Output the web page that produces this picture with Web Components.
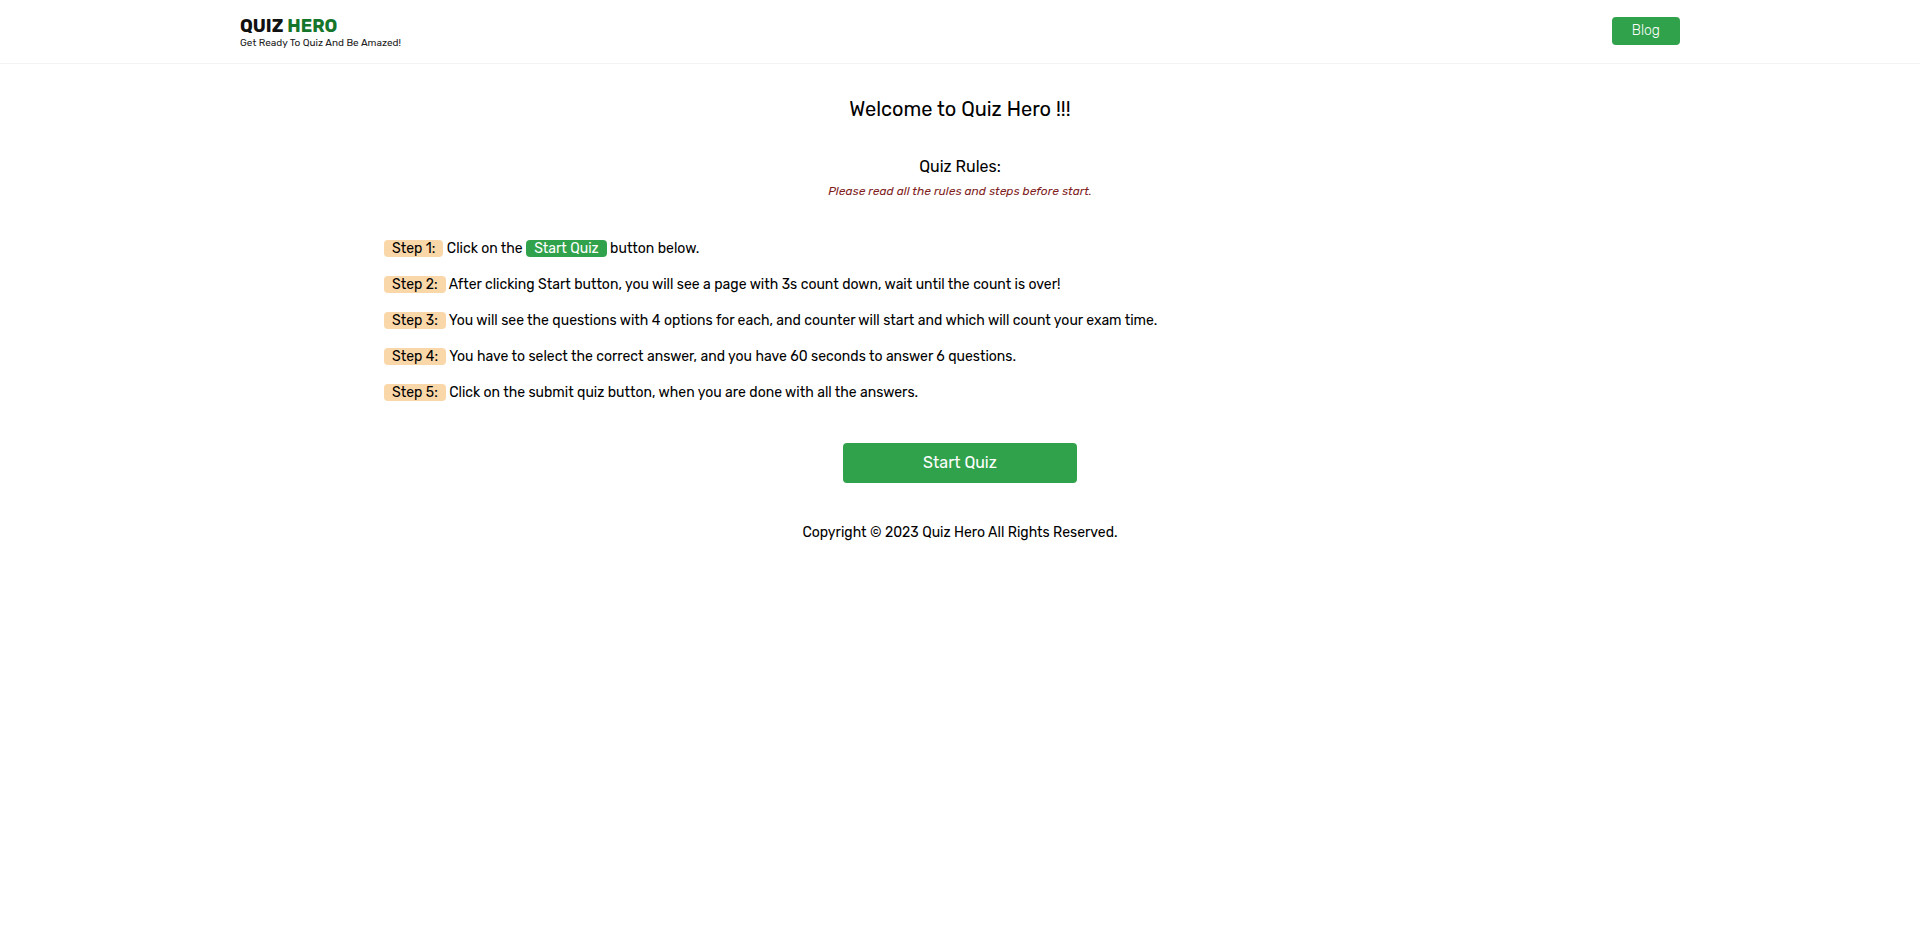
<!DOCTYPE html>
<html lang="en">
<head>
<meta charset="utf-8">
<meta name="viewport" content="width=device-width, initial-scale=1">
<title>Quiz Hero</title>
<style>
  body {
    margin: 0;
    background: #fff;
    color: #000;
    font-family: Rubik, "Open Sans", "Noto Sans", sans-serif;
    font-size: 14px;
    line-height: 20px;
    --green: #31a24c;
    --tag: #fad7a9;
  }
</style>
</head>
<body>
<quiz-app></quiz-app>

<template id="header-tpl">
  <style>
    :host { display: block; border-bottom: 1px solid #f3f4f6; }
    header {
      display: flex; align-items: center; justify-content: space-between;
      width: 75%; margin: 0 auto; padding: 14px 0 15px;
    }
    h1 { margin: 0; font-size: 18px; line-height: 24px; font-weight: 700; color: #111; }
    h1 span { color: #15762b; }
    p { margin: 0; font-size: 10px; line-height: 10px; color: #222; }
  </style>
  <header>
    <div>
      <h1>QUIZ <span>HERO</span></h1>
      <p>Get Ready To Quiz And Be Amazed!</p>
    </div>
    <nav><slot></slot></nav>
  </header>
</template>

<template id="link-tpl">
  <style>
    :host { display: block; }
    a {
      display: block; padding: 4px 20px; border-radius: 4px; font-weight: 300;
      background: var(--green); color: #fff; text-decoration: none;
    }
  </style>
  <a href="#blog"><slot></slot></a>
</template>

<template id="step-tpl">
  <style>
    :host { display: block; }
    .tag {
      display: inline-block; padding: 0 8px; border-radius: 4px;
      line-height: 17px; background: var(--tag);
    }
  </style>
  <span class="tag">Step <span id="n"></span>:</span> <slot></slot>
</template>

<template id="badge-tpl">
  <style>
    :host {
      display: inline-block; padding: 0 8px; border-radius: 4px;
      line-height: 17px; background: var(--green); color: #fff;
    }
  </style>
  <slot></slot>
</template>

<template id="start-tpl">
  <style>
    :host { display: block; }
    button {
      display: block; width: 100%; padding: 8px; border: 0; border-radius: 4px;
      background: var(--green); color: #fff; font: inherit;
      font-size: 16px; line-height: 24px; cursor: pointer;
    }
  </style>
  <button type="button"><slot></slot></button>
</template>

<template id="app-tpl">
  <style>
    :host { display: block; }
    main { width: 60%; margin: 0 auto; padding-top: 31px; }
    h2, h3, p { margin: 0; font-weight: 400; text-align: center; }
    h2 { font-size: 20px; line-height: 28px; }
    h3 { margin-top: 32px; font-size: 16px; line-height: 24px; }
    .note { margin-top: 2px; font-size: 12px; font-style: italic; color: #7f1d1d; }
    .steps { display: grid; gap: 16px; margin: 38px 0 40px; }
    quiz-start { width: 234px; margin: 0 auto; }
    footer { padding: 40px 0; text-align: center; }
  </style>
  <quiz-header><quiz-link>Blog</quiz-link></quiz-header>
  <main>
    <h2>Welcome to Quiz Hero !!!</h2>
    <h3>Quiz Rules:</h3>
    <p class="note">Please read all the rules and steps before start.</p>
    <div class="steps" role="list">
      <quiz-step role="listitem" number="1">Click on the <quiz-badge>Start Quiz</quiz-badge> button below.</quiz-step>
      <quiz-step role="listitem" number="2">After clicking Start button, you will see a page with 3s count down, wait until the count is over!</quiz-step>
      <quiz-step role="listitem" number="3">You will see the questions with 4 options for each, and counter will start and which will count your exam time.</quiz-step>
      <quiz-step role="listitem" number="4">You have to select the correct answer, and you have 60 seconds to answer 6 questions.</quiz-step>
      <quiz-step role="listitem" number="5">Click on the submit quiz button, when you are done with all the answers.</quiz-step>
    </div>
    <quiz-start>Start Quiz</quiz-start>
  </main>
  <footer>Copyright © 2023 Quiz Hero All Rights Reserved.</footer>
</template>

<script>
  class TemplateElement extends HTMLElement {
    constructor() {
      super();
      const tpl = document.getElementById(this.constructor.template);
      this.attachShadow({ mode: "open" }).append(tpl.content.cloneNode(true));
    }
  }
  class QuizHeader extends TemplateElement { static template = "header-tpl"; }
  class QuizLink extends TemplateElement { static template = "link-tpl"; }
  class QuizBadge extends TemplateElement { static template = "badge-tpl"; }
  class QuizStart extends TemplateElement { static template = "start-tpl"; }
  class QuizStep extends TemplateElement {
    static template = "step-tpl";
    connectedCallback() {
      this.shadowRoot.getElementById("n").textContent = this.getAttribute("number");
    }
  }
  class QuizApp extends TemplateElement { static template = "app-tpl"; }

  customElements.define("quiz-header", QuizHeader);
  customElements.define("quiz-link", QuizLink);
  customElements.define("quiz-badge", QuizBadge);
  customElements.define("quiz-start", QuizStart);
  customElements.define("quiz-step", QuizStep);
  customElements.define("quiz-app", QuizApp);
</script>
</body>
</html>
